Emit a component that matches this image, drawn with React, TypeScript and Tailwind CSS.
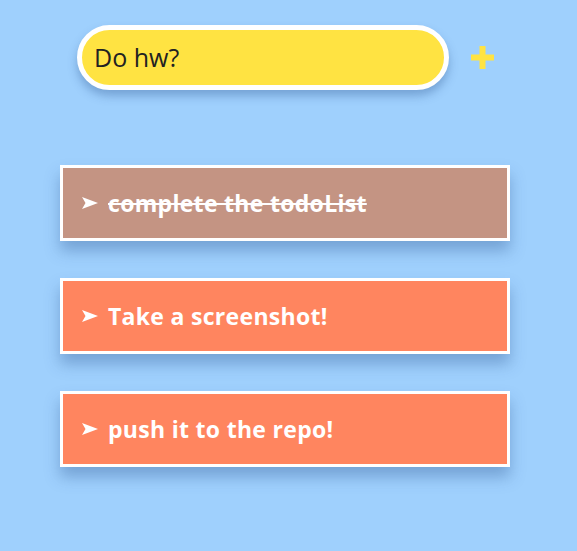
const todos = [
  { text: 'complete the todoList', done: true },
  { text: 'Take a screenshot!', done: false },
  { text: 'push it to the repo!', done: false },
];

function Arrow() {
  return (
    <svg width="16" height="12" viewBox="0 0 16 12" className="block shrink-0">
      <polygon points="0,0 16,6 0,12 3.5,6" fill="#fff" />
    </svg>
  );
}

export default function App() {
  return (
    <div className="min-h-screen w-full bg-[#9fd0fd] pt-[25px] font-['Open_Sans',sans-serif]">
      {/* input row */}
      <div className="flex items-center gap-[22px] pl-[77px]">
        <div className="w-[372px] h-[65px] rounded-full border-[5px] border-white bg-[#ffe342] shadow-[0_6px_10px_rgba(40,80,140,0.35)] flex items-center pl-[12px]">
          <span className="text-[25px] text-[#222]">Do hw?</span>
        </div>
        <svg width="23" height="23" viewBox="0 0 23 23" className="block">
          <rect x="8.5" y="0" width="6" height="23" fill="#ffe342" />
          <rect x="0" y="8.5" width="23" height="6" fill="#ffe342" />
        </svg>
      </div>

      {/* todo list */}
      <div className="mt-[75px] flex flex-col gap-[37px] pl-[60px]">
        {todos.map((t) => (
          <div
            key={t.text}
            className={
              'w-[450px] h-[76px] border-[3px] border-white flex items-center gap-[10px] pl-[19px] shadow-[0_10px_14px_rgba(40,80,140,0.35)] ' +
              (t.done ? 'bg-[#c49483]' : 'bg-[#ff855f]')
            }
          >
            <Arrow />
            <span
              className={
                'text-white text-[23px] font-bold tracking-[0.3px] leading-none ' + (t.done ? 'line-through' : '')
              }
            >
              {t.text}
            </span>
          </div>
        ))}
      </div>
    </div>
  );
}
